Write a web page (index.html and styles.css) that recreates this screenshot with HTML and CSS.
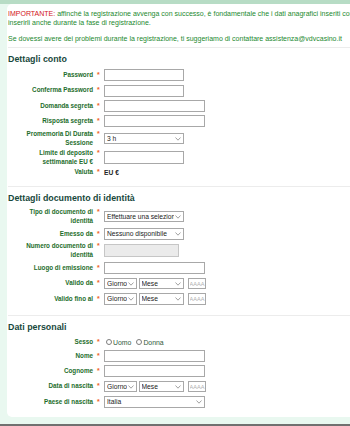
FILE: index.html
```html
<!DOCTYPE html>
<html lang="it">
<head>
<meta charset="utf-8">
<title>Registrazione</title>
<link rel="stylesheet" href="styles.css">
</head>
<body>
<div class="topbar"></div>
<div class="panel">
  <div class="notice">
    <p><span class="imp">IMPORTANTE:</span> affinché la registrazione avvenga con successo, è fondamentale che i dati anagrafici inseriti corrispondano a quelli del documento;<br>inserirli anche durante la fase di registrazione.</p>
    <p class="gap">Se dovessi avere dei problemi durante la registrazione, ti suggeriamo di contattare assistenza@vdvcasino.it</p>
  </div>

  <section class="sec">
    <h2>Dettagli conto</h2>
    <div class="row"><div class="lab"><span class="txt">Password</span><span class="req">*</span></div><input class="in w80" type="password"></div>
    <div class="row"><div class="lab"><span class="txt">Conferma Password</span><span class="req">*</span></div><input class="in w80" type="password"></div>
    <div class="row"><div class="lab"><span class="txt">Domanda segreta</span><span class="req">*</span></div><input class="in w101" type="text"></div>
    <div class="row"><div class="lab"><span class="txt">Risposta segreta</span><span class="req">*</span></div><input class="in w101" type="text"></div>
    <div class="row"><div class="lab"><span class="txt">Promemoria Di Durata Sessione</span><span class="req">*</span></div>
      <span class="sel w80"><select><option>3 h</option></select><svg class="chev" width="6" height="4" viewBox="0 0 6 4"><polyline points="0.5,0.5 3,3.2 5.5,0.5" fill="none" stroke="#8a8a8a" stroke-width="0.8"/></svg></span></div>
    <div class="row"><div class="lab"><span class="txt">Limite di deposito settimanale EU €</span><span class="req">*</span></div><input class="in w80 tall" type="text"></div>
    <div class="row short"><div class="lab"><span class="txt">Valuta</span><span class="req">*</span></div><span class="val">EU €</span></div>
  </section>

  <section class="sec">
    <h2>Dettagli documento di identità</h2>
    <div class="row"><div class="lab"><span class="txt">Tipo di documento di identità</span><span class="req">*</span></div>
      <span class="sel w80"><select><option>Effettuare una selezione</option></select><svg class="chev" width="6" height="4" viewBox="0 0 6 4"><polyline points="0.5,0.5 3,3.2 5.5,0.5" fill="none" stroke="#8a8a8a" stroke-width="0.8"/></svg></span></div>
    <div class="row"><div class="lab"><span class="txt">Emesso da</span><span class="req">*</span></div>
      <span class="sel w80"><select><option>Nessuno disponibile</option></select><svg class="chev" width="6" height="4" viewBox="0 0 6 4"><polyline points="0.5,0.5 3,3.2 5.5,0.5" fill="none" stroke="#8a8a8a" stroke-width="0.8"/></svg></span></div>
    <div class="row"><div class="lab"><span class="txt">Numero documento di identità</span><span class="req">*</span></div><input class="in w75 dis tall" type="text" disabled></div>
    <div class="row"><div class="lab"><span class="txt">Luogo di emissione</span><span class="req">*</span></div><input class="in w101" type="text"></div>
    <div class="row"><div class="lab"><span class="txt">Valido da</span><span class="req">*</span></div>
      <div class="date">
        <span class="sel wd"><select><option>Giorno</option></select><svg class="chev" width="6" height="4" viewBox="0 0 6 4"><polyline points="0.5,0.5 3,3.2 5.5,0.5" fill="none" stroke="#8a8a8a" stroke-width="0.8"/></svg></span>
        <span class="sel wm"><select><option>Mese</option></select><svg class="chev" width="6" height="4" viewBox="0 0 6 4"><polyline points="0.5,0.5 3,3.2 5.5,0.5" fill="none" stroke="#8a8a8a" stroke-width="0.8"/></svg></span>
        <input class="in wy" type="text" placeholder="AAAA">
      </div></div>
    <div class="row"><div class="lab"><span class="txt">Valido fino al</span><span class="req">*</span></div>
      <div class="date">
        <span class="sel wd"><select><option>Giorno</option></select><svg class="chev" width="6" height="4" viewBox="0 0 6 4"><polyline points="0.5,0.5 3,3.2 5.5,0.5" fill="none" stroke="#8a8a8a" stroke-width="0.8"/></svg></span>
        <span class="sel wm"><select><option>Mese</option></select><svg class="chev" width="6" height="4" viewBox="0 0 6 4"><polyline points="0.5,0.5 3,3.2 5.5,0.5" fill="none" stroke="#8a8a8a" stroke-width="0.8"/></svg></span>
        <input class="in wy" type="text" placeholder="AAAA">
      </div></div>
  </section>

  <section class="sec last">
    <h2>Dati personali</h2>
    <div class="row radio-row"><div class="lab"><span class="txt">Sesso</span><span class="req">*</span></div>
      <div class="radios">
        <label class="opt"><input type="radio" name="sesso" class="rad">Uomo</label>
        <label class="opt"><input type="radio" name="sesso" class="rad">Donna</label>
      </div></div>
    <div class="row"><div class="lab"><span class="txt">Nome</span><span class="req">*</span></div><input class="in w101" type="text"></div>
    <div class="row"><div class="lab"><span class="txt">Cognome</span><span class="req">*</span></div><input class="in w101" type="text"></div>
    <div class="row"><div class="lab"><span class="txt">Data di nascita</span><span class="req">*</span></div>
      <div class="date">
        <span class="sel wd"><select><option>Giorno</option></select><svg class="chev" width="6" height="4" viewBox="0 0 6 4"><polyline points="0.5,0.5 3,3.2 5.5,0.5" fill="none" stroke="#8a8a8a" stroke-width="0.8"/></svg></span>
        <span class="sel wm"><select><option>Mese</option></select><svg class="chev" width="6" height="4" viewBox="0 0 6 4"><polyline points="0.5,0.5 3,3.2 5.5,0.5" fill="none" stroke="#8a8a8a" stroke-width="0.8"/></svg></span>
        <input class="in wy" type="text" placeholder="AAAA">
      </div></div>
    <div class="row"><div class="lab"><span class="txt">Paese di nascita</span><span class="req">*</span></div>
      <span class="sel w101"><select><option>Italia</option></select><svg class="chev" width="6" height="4" viewBox="0 0 6 4"><polyline points="0.5,0.5 3,3.2 5.5,0.5" fill="none" stroke="#8a8a8a" stroke-width="0.8"/></svg></span></div>
  </section>
</div>
<div class="baseline"></div>
</body>
</html>
```

FILE: styles.css
```css
* { box-sizing: border-box; }
html, body { margin: 0; padding: 0; }
body {
  width: 350px;
  height: 426px;
  overflow: hidden;
  background: #e9f8f0;
  font-family: "Liberation Sans", Arial, sans-serif;
  color: #222;
}
.topbar { height: 4px; background: #b7dcc5; }
.panel {
  margin-left: 7px;
  background: #fff;
  border-radius: 5px 0 0 5px;
  padding: 4.5px 0 7.5px 1px;
}
.notice {
  font-size: 7px;
  line-height: 9px;
  color: #23892f;
  white-space: nowrap;
  overflow: hidden;
}
.notice p { margin: 0; }
.notice .gap { margin-top: 7px; }
.imp { color: #d2141b; }

.sec {
  border-top: 1px solid #ececec;
  margin-top: 4px;
  padding-bottom: 4.5px;
}
.sec h2 {
  margin: 5px 0 3px;
  font-size: 8.85px;
  line-height: 12px;
  font-weight: bold;
  color: #17483c;
}
.sec.last { padding-bottom: 0; }

.row {
  display: flex;
  align-items: center;
  min-height: 15.4px;
  margin-left: 15px;
}
.row.short { min-height: 10.5px; }
.row.radio-row { min-height: 12px; }
.lab {
  display: flex;
  align-items: flex-start;
  width: 81px;
  flex: none;
  padding: 1px 0;
}
.txt {
  width: 70px;
  text-align: right;
  font-size: 6.3px;
  line-height: 8.5px;
  font-weight: bold;
  color: #1d6d2b;
}
.req {
  padding-left: 4px;
  color: #f0641e;
  font-size: 7px;
  line-height: 7px;
  font-weight: bold;
}

.in {
  display: block;
  height: 12px;
  border: 1px solid #a8a8a8;
  background: #fff;
  padding: 0 2px;
  margin: 0;
  font: 6.7px "Liberation Sans", Arial, sans-serif;
  color: #222;
  outline: none;
  border-radius: 0;
}
.in.tall { height: 13px; }
.in::placeholder { color: #b0b0b0; }
.dis { background: #ebebeb; border-color: #c6c6c6; }
.w80 { width: 80px; }
.w101 { width: 101px; }
.w75 { width: 75px; }

.sel {
  position: relative;
  display: block;
  flex: none;
  height: 11.5px;
}
.sel select {
  display: block;
  -webkit-appearance: none;
  appearance: none;
  width: 100%;
  height: 11.5px;
  border: 1px solid #a8a8a8;
  border-radius: 0;
  background: #fff;
  margin: 0;
  padding: 0 9px 0 2px;
  font: 6.7px "Liberation Sans", Arial, sans-serif;
  line-height: 9px;
  color: #222;
  outline: none;
}
.chev {
  position: absolute;
  right: 3px;
  top: 4px;
  pointer-events: none;
}
.date { display: flex; align-items: center; }
.wd { width: 33px; }
.wm { width: 45px; margin-left: 1.5px; }
.wy {
  width: 18.5px;
  margin-left: 4px;
  padding: 0 0 0 1px;
  height: 11.5px;
  font-size: 5.6px;
}

.val {
  font-size: 6.7px;
  font-weight: bold;
  color: #222;
}
.radios { display: flex; align-items: center; gap: 5px; margin-left: 2px; }
.opt {
  display: flex;
  align-items: center;
  font-size: 6.9px;
  color: #2f5a3a;
}
.rad {
  -webkit-appearance: none;
  appearance: none;
  width: 6px;
  height: 6px;
  margin: 0 1px 0 0;
  border: 1px solid #7d7d7d;
  border-radius: 50%;
  background: #fff;
}
.baseline {
  margin-top: 6.5px;
  height: 2px;
  background: #707070;
}
```
